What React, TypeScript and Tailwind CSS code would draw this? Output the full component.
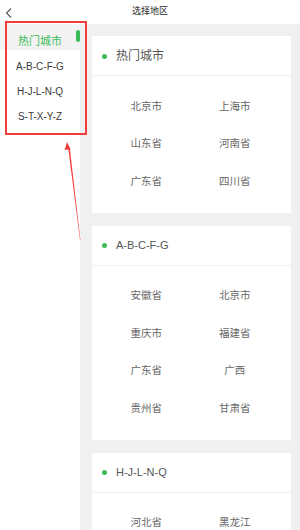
import React from "react"

const GREEN = "bg-[#3dbb5b]"

type Section = { title: string; latin?: boolean; items: string[] }

const SECTIONS: Section[] = [
  { title: "热门城市", items: ["北京市", "上海市", "山东省", "河南省", "广东省", "四川省"] },
  {
    title: "A-B-C-F-G",
    latin: true,
    items: ["安徽省", "北京市", "重庆市", "福建省", "广东省", "广西", "贵州省", "甘肃省"],
  },
  { title: "H-J-L-N-Q", latin: true, items: ["河北省", "黑龙江", "湖北省", "湖南省"] },
]

const NAV = ["A-B-C-F-G", "H-J-L-N-Q", "S-T-X-Y-Z"]

function Card({ section }: { section: Section }) {
  return (
    <div className="shrink-0 bg-white">
      {/* Header */}
      <div className="flex h-[40px] items-center border-b border-[#f0f0f0] pl-[10px] pt-[1px]">
        <span className={`h-[5px] w-[5px] rounded-full ${GREEN}`} />
        <span
          className={`ml-[9px] text-[#555] ${section.latin ? "text-[11px]" : "text-[12px]"}`}
        >
          {section.title}
        </span>
      </div>
      {/* Grid */}
      <div className="grid grid-cols-2 pb-[12.5px] pl-[10px] pr-[12px] pt-[12px]">
        {section.items.map((it, i) => (
          <div key={i} className="flex h-[37.5px] items-center justify-center text-[10.5px] text-[#666]">
            {it}
          </div>
        ))}
      </div>
    </div>
  )
}

export default function App() {
  return (
    <div
      className="relative h-[530px] w-[300px] overflow-hidden bg-white"
      style={{ fontFamily: '"Liberation Sans", "Noto Sans CJK SC", sans-serif' }}
    >
      {/* Top bar */}
      <div className="relative flex h-[24px] items-center justify-center bg-white">
        <svg className="absolute left-[5px] top-[7px]" width="8" height="12" viewBox="0 0 8 12">
          <polyline points="6,1.5 1.5,6 6,10.5" fill="none" stroke="#555" strokeWidth="1.1" />
        </svg>
        <span className="text-[9px] text-[#222]">选择地区</span>
      </div>

      <div className="flex h-[506px]">
        {/* Sidebar */}
        <div className="w-[80px] shrink-0 bg-white">
          <div className="relative bg-[#f3f3f3] pb-[2px] pt-[10px] text-center text-[11px] leading-[14px] text-[#3dbb5b]">
            热门城市
            <span className={`absolute right-0 top-[6px] h-[12px] w-[4px] rounded-full ${GREEN}`} />
          </div>
          <div className="mt-[4px] flex flex-col">
            {NAV.map((n) => (
              <div key={n} className="flex h-[25px] items-center justify-center text-[10px] text-[#3a3a3a]">
                {n}
              </div>
            ))}
          </div>
        </div>

        {/* Content */}
        <div className="flex flex-1 flex-col gap-[12.5px] overflow-hidden bg-[#f0f0f0] pl-[12px] pr-[9px] pt-[12px]">
          {SECTIONS.map((s) => (
            <Card key={s.title} section={s} />
          ))}
        </div>
      </div>

      {/* Annotation box */}
      <div className="pointer-events-none absolute left-[5px] top-[21px] h-[114px] w-[82px] border-2 border-[#f23c3c]" />

      {/* Annotation arrow */}
      <svg className="pointer-events-none absolute left-0 top-0" width="300" height="530" viewBox="0 0 300 530">
        <polygon points="68.2,148 69.8,148 80.4,240 80,240" fill="#f23c3c" />
        <polygon points="67,142 64.6,150 70.6,149.3" fill="#f23c3c" />
      </svg>
    </div>
  )
}
